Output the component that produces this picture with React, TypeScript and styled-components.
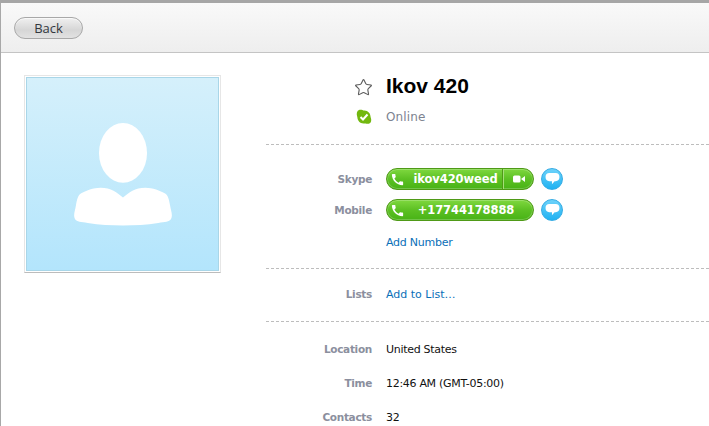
import React from "react"
import styled, { createGlobalStyle } from "styled-components"
import { MdCall } from "react-icons/md"
import { Star } from "lucide-react"

const GlobalStyle = createGlobalStyle`
  html, body {
    margin: 0;
    padding: 0;
    background: #fff;
    overflow: hidden;
  }
`

const Window = styled.div`
  box-sizing: border-box;
  width: 709px;
  height: 426px;
  overflow: hidden;
  background: #fff;
  border-top: 3px solid #a6a6a6;
  border-left: 1px solid #a8a8a8;
  font-family: "DejaVu Sans", sans-serif;
  font-size: 11px;
  letter-spacing: -0.25px;
  color: #111;
`

const Toolbar = styled.header`
  box-sizing: border-box;
  height: 50px;
  padding: 14px 0 0 13px;
  background: linear-gradient(#f9f9f9, #eeeeee);
  border-bottom: 1px solid #c4c4c4;
`

const BackButton = styled.button`
  display: block;
  box-sizing: border-box;
  width: 69px;
  height: 22px;
  padding: 0;
  border: 1px solid #a8a8a8;
  border-radius: 11px;
  background: linear-gradient(#f0f0f0, #d6d6d6 60%, #e2e2e2);
  box-shadow: inset 0 1px 0 rgba(255, 255, 255, 0.6);
  color: #33383f;
  font-family: "Open Sans", sans-serif;
  font-size: 13px;
  font-weight: 500;
  line-height: 20px;
`

const Content = styled.main`
  display: flex;
  align-items: flex-start;
`

const AvatarColumn = styled.div`
  width: 265px;
  padding: 22px 0 0 23px;
  box-sizing: border-box;
  flex: none;
`

const AvatarFrame = styled.div`
  box-sizing: border-box;
  width: 197px;
  height: 198px;
  border: 1px solid #e6e6e6;
  border-bottom-color: #bcbcbc;
  padding: 1px;
  background: #fff;
`

const AvatarFill = styled.div`
  display: flex;
  justify-content: center;
  height: 100%;
  box-sizing: border-box;
  border: 1px solid #a9d6e8;
  background: linear-gradient(#d5f0fb, #b3e5fc);
  padding-top: 44px;
`

const Details = styled.div`
  flex: 1;
`

const Section = styled.section<{ $height: number; $top: number; $last?: boolean }>`
  box-sizing: border-box;
  height: ${(p) => p.$height}px;
  padding-top: ${(p) => p.$top}px;
  border-bottom: ${(p) => (p.$last ? "none" : "1px dashed #bdbdbd")};
`

const Row = styled.div<{ $height?: number; $above?: number }>`
  display: grid;
  grid-template-columns: 106px auto;
  column-gap: 14px;
  align-items: center;
  justify-content: start;
  height: ${(p) => p.$height ?? 22}px;
  margin-top: ${(p) => p.$above ?? 0}px;
`

const Label = styled.span`
  text-align: right;
  font-size: 10.5px;
  letter-spacing: -0.3px;
  font-weight: bold;
  color: #8b8f9e;
`

const Value = styled.span`
  letter-spacing: -0.3px;
  color: #111;
`

const LinkText = styled.a`
  color: #0a6fb8;
`

const ListLink = styled(LinkText)`
  letter-spacing: 0;
`

const IconCell = styled.span`
  display: flex;
  justify-content: flex-end;
  align-items: center;
`

const StarIcon = styled(Star)`
  margin-right: -1px;
  margin-top: 2px;
`

const Name = styled.h1`
  margin: 0;
  font-family: "Liberation Sans", sans-serif;
  font-size: 21px;
  letter-spacing: 0;
  line-height: 24px;
  font-weight: bold;
  color: #000;
`

const StatusText = styled.span`
  font-size: 12px;
  letter-spacing: 0.15px;
  color: #7d8390;
`

const Actions = styled.div`
  display: flex;
  align-items: center;
  gap: 7px;
`

const Pill = styled.div`
  box-sizing: border-box;
  display: flex;
  align-items: center;
  width: 148px;
  height: 22px;
  border: 1px solid #4f9a17;
  border-radius: 11px;
  background: linear-gradient(#7fd83f, #5cc023 50%, #48b316);
  box-shadow: inset 0 0 0 1px rgba(255, 255, 255, 0.22);
  color: #fff;
  overflow: hidden;
`

const PhoneSlot = styled.span`
  display: flex;
  width: 18px;
  justify-content: flex-end;
  flex: none;
`

const PillText = styled.span<{ $inset: number }>`
  flex: 1;
  text-align: center;
  padding: 0 ${(p) => p.$inset}px 0 3px;
  font-weight: bold;
  font-size: 11.5px;
  letter-spacing: -0.1px;
  white-space: nowrap;
`

const VideoSlot = styled.span`
  display: flex;
  align-items: center;
  justify-content: center;
  width: 29px;
  height: 100%;
  flex: none;
  border-left: 1px solid #a3df78;
  box-shadow: -1px 0 0 #4f9a17;
`

const ChatButton = styled.span`
  display: flex;
  align-items: center;
  justify-content: center;
  box-sizing: border-box;
  width: 22px;
  height: 22px;
  border-radius: 50%;
  border: 1px solid #35ace4;
  background: linear-gradient(#6dd2fa, #1fb2f2);
`

const contacts = [
  { label: "Skype", value: "ikov420weed", video: true },
  { label: "Mobile", value: "+17744178888", video: false },
]

const facts = [
  { label: "Location", value: "United States" },
  { label: "Time", value: "12:46 AM (GMT-05:00)" },
  { label: "Contacts", value: "32" },
]

const AvatarSilhouette = () => (
  <svg width="98" height="105" viewBox="0 0 100 105">
    <ellipse cx="50" cy="30.500" rx="24.500" ry="30.500" fill="#fff" />
    <path
      d="M50 76 C44 71 38 66 27 66 C20 66 12 69 7 72 C4 74 3 78 2 84 C1 90 -1 94 1 98 C3 101 7 101 14 102 C26 104 38 104.500 50 104.500 C62 104.500 74 104 86 102 C93 101 97 101 99 98 C101 94 99 90 98 84 C97 78 96 74 93 72 C88 69 80 66 73 66 C62 66 56 71 50 76 Z"
      fill="#fff"
    />
  </svg>
)

const SkypeCheck = () => (
  <svg width="16" height="16" viewBox="0 0 16 16">
    <path
      d="M3.500 0.800 C5.500 0.300 6.500 1.300 8.500 1.500 C12 1.800 14.500 4.200 14.600 8 C14.700 9.200 15.600 10 15.100 12.200 C14.600 14.400 12.400 15.200 10.500 14.700 C9.300 14.400 8.500 14.600 7.500 14.500 C4 14.200 1.600 12 1.400 8.500 C1.300 7 0.400 6 0.900 3.800 C1.200 2.300 2.200 1.100 3.500 0.800 Z"
      fill="#72b80f"
    />
    <path d="M4.500 8 L7 10.500 L11.500 5.500" fill="none" stroke="#fff" strokeWidth="2" />
  </svg>
)

const VideoIcon = () => (
  <svg width="12" height="8" viewBox="0 0 12 8">
    <rect x="0" y="0.500" width="7.500" height="7" rx="1.500" fill="#fff" />
    <path d="M8 4 L12 1 V7 Z" fill="#fff" />
  </svg>
)

const BubbleIcon = () => (
  <svg width="15" height="14" viewBox="0 0 14 13">
    <path
      d="M4 1 H10 C12.200 1 13.500 2.500 13.500 4.700 C13.500 7 12.200 8.500 10 8.500 H9 L6.500 11.500 V8.500 H4 C1.800 8.500 0.500 7 0.500 4.700 C0.500 2.500 1.800 1 4 1 Z"
      fill="#fff"
    />
  </svg>
)

const App: React.FC = () => {
  return (
    <Window>
      <GlobalStyle />
      <Toolbar>
        <BackButton>Back</BackButton>
      </Toolbar>
      <Content>
        <AvatarColumn>
          <AvatarFrame>
            <AvatarFill>
              <AvatarSilhouette />
            </AvatarFill>
          </AvatarFrame>
        </AvatarColumn>
        <Details>
          <Section $height={92} $top={20}>
            <Row $height={26}>
              <IconCell>
                <StarIcon size={19} color="#5c5c5c" strokeWidth={1.4} />
              </IconCell>
              <Name>Ikov 420</Name>
            </Row>
            <Row $height={30} $above={3}>
              <IconCell>
                <SkypeCheck />
              </IconCell>
              <StatusText>Online</StatusText>
            </Row>
          </Section>
          <Section $height={124} $top={23}>
            {contacts.map((c, i) => (
              <Row key={c.label} $above={i > 0 ? 9 : 0}>
                <Label>{c.label}</Label>
                <Actions>
                  <Pill>
                    <PhoneSlot>
                      <MdCall size={15} color="#fff" />
                    </PhoneSlot>
                    <PillText $inset={c.video ? 0 : 9}>{c.value}</PillText>
                    {c.video && (
                      <VideoSlot>
                        <VideoIcon />
                      </VideoSlot>
                    )}
                  </Pill>
                  <ChatButton>
                    <BubbleIcon />
                  </ChatButton>
                </Actions>
              </Row>
            ))}
            <Row $above={10}>
              <span />
              <LinkText>Add Number</LinkText>
            </Row>
          </Section>
          <Section $height={53} $top={14}>
            <Row>
              <Label>Lists</Label>
              <ListLink>Add to List…</ListLink>
            </Row>
          </Section>
          <Section $height={120} $top={10} $last>
            {facts.map((f) => (
              <Row key={f.label} $height={34}>
                <Label>{f.label}</Label>
                <Value>{f.value}</Value>
              </Row>
            ))}
          </Section>
        </Details>
      </Content>
    </Window>
  )
}

export default App
